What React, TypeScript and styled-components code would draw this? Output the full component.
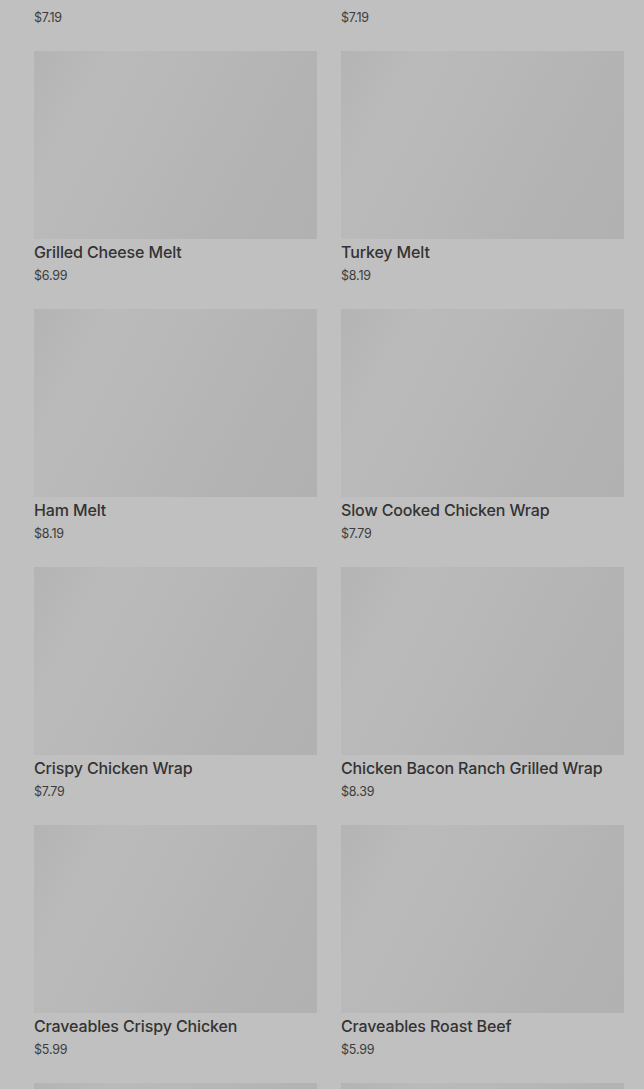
import React from "react";
import styled, { createGlobalStyle } from "styled-components";

const GlobalStyle = createGlobalStyle`
  html, body { margin: 0; padding: 0; background: #c0c0c0; }
  body { overflow: hidden; }
`;

const Page = styled.div`
  width: 644px;
  height: 1089px;
  overflow: hidden;
  background: #c0c0c0;
  box-sizing: border-box;
  padding: 0 20px 0 34px;
  font-family: Inter, "Liberation Sans", sans-serif;
`;

const Grid = styled.div`
  display: grid;
  grid-template-columns: 283px 283px;
  column-gap: 24px;
  row-gap: 22px;
  margin-top: -207px;
`;

const Card = styled.div`
  display: flex;
  flex-direction: column;
`;

const Thumb = styled.div`
  height: 188px;
  background: linear-gradient(
    118deg,
    #b4b4b4 0%,
    #bababa 20%,
    #b9b9b9 34%,
    #b7b7b7 50%,
    #b3b3b3 72%,
    #b1b1b1 100%
  );
`;

const Title = styled.div`
  margin-top: 2px;
  font-size: 16px;
  line-height: 22px;
  font-weight: 500;
  letter-spacing: -0.13px;
  color: #333333;
  white-space: nowrap;
`;

const Price = styled.div`
  padding-top: 2px;
  font-size: 12.5px;
  line-height: 22px;
  letter-spacing: -0.2px;
  color: #3c3c3c;
`;

const items = [
  { name: "Chicken Bacon Ranch Melt", price: "$7.19" },
  { name: "Chicken Melt", price: "$7.19" },
  { name: "Grilled Cheese Melt", price: "$6.99" },
  { name: "Turkey Melt", price: "$8.19" },
  { name: "Ham Melt", price: "$8.19" },
  { name: "Slow Cooked Chicken Wrap", price: "$7.79" },
  { name: "Crispy Chicken Wrap", price: "$7.79" },
  { name: "Chicken Bacon Ranch Grilled Wrap", price: "$8.39" },
  { name: "Craveables Crispy Chicken", price: "$5.99" },
  { name: "Craveables Roast Beef", price: "$5.99" },
  { name: "Craveables Chicken Bacon", price: "$5.99" },
  { name: "Craveables Ham", price: "$5.99" },
];

export default function App() {
  return (
    <>
      <GlobalStyle />
      <Page>
        <Grid>
          {items.map((it, i) => (
            <Card key={i}>
              <Thumb />
              <Title>{it.name}</Title>
              <Price>{it.price}</Price>
            </Card>
          ))}
        </Grid>
      </Page>
    </>
  );
}
